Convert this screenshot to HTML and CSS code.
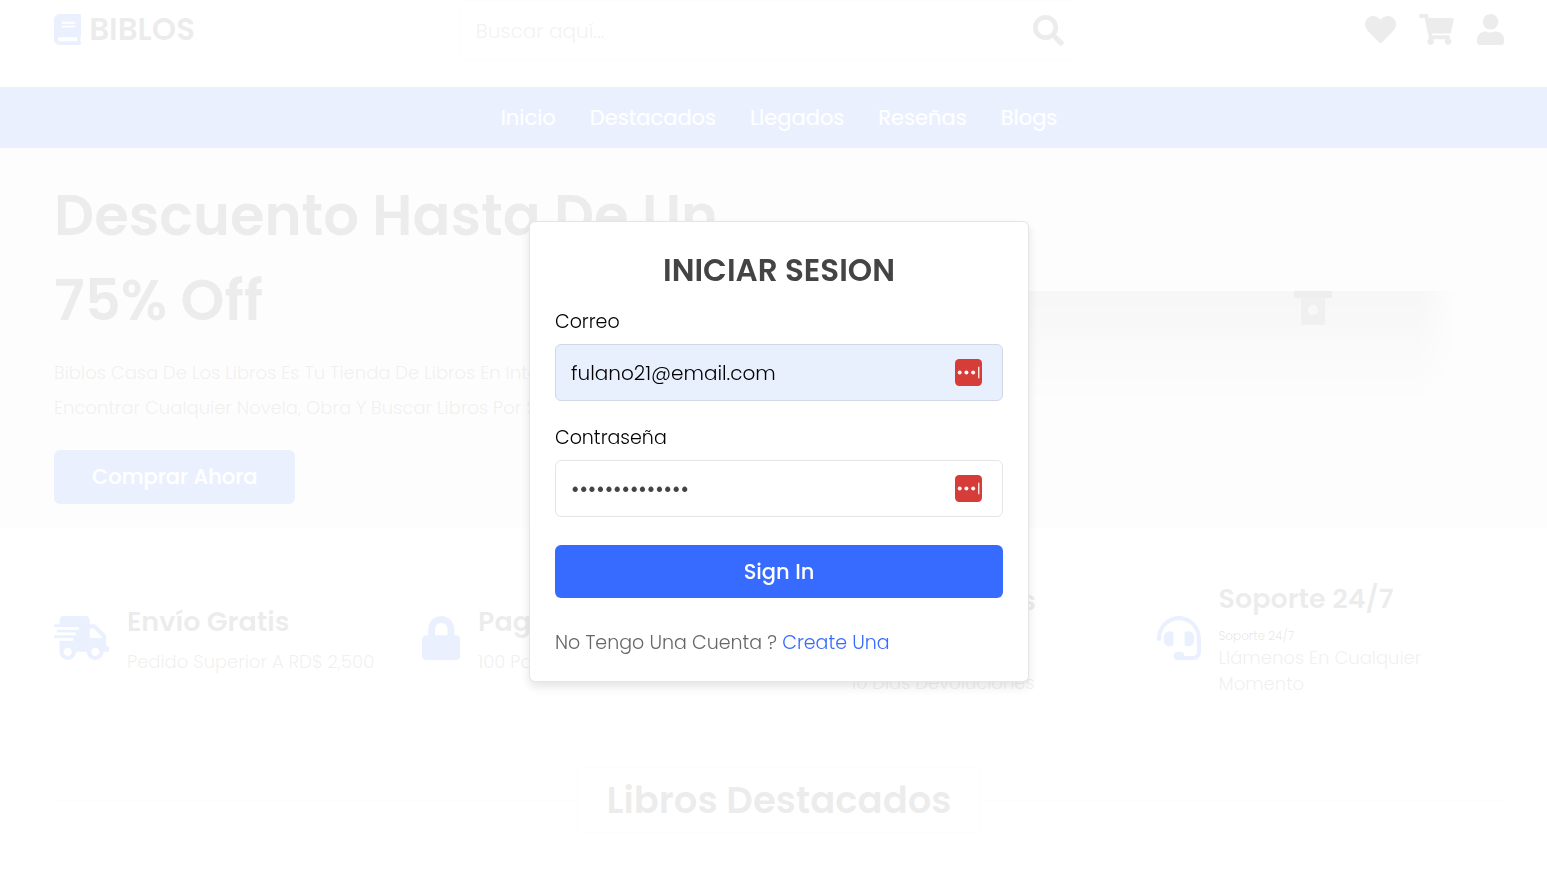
FILE: index.html
```html
<!DOCTYPE html>
<html lang="es">
<head>
<meta charset="utf-8">
<meta name="viewport" content="width=device-width, initial-scale=1">
<title>Biblos</title>
<link rel="stylesheet" href="styles.css">
</head>
<body>
<div class="page">
  <header class="header">
    <a class="logo" href="#">
      <svg class="icon icon-md" viewBox="0 0 448 512" aria-hidden="true"><path d="M448 360V24c0-13.300-10.700-24-24-24H96C43 0 0 43 0 96v320c0 53 43 96 96 96h328c13.300 0 24-10.700 24-24v-16c0-7.500-3.500-14.300-8.900-18.700-4.200-15.400-4.200-59.300 0-74.700 5.400-4.300 8.900-11.100 8.900-18.600zM128 134c0-3.300 2.700-6 6-6h212c3.300 0 6 2.700 6 6v20c0 3.300-2.700 6-6 6H134c-3.300 0-6-2.700-6-6v-20zm0 64c0-3.300 2.700-6 6-6h212c3.300 0 6 2.700 6 6v20c0 3.300-2.700 6-6 6H134c-3.300 0-6-2.700-6-6v-20zm253.400 250H96c-17.700 0-32-14.300-32-32 0-17.600 14.400-32 32-32h285.400c-1.900 17.100-1.900 46.900 0 64z"/></svg>
      <span>BIBLOS</span>
    </a>
    <form class="search">
      <input class="search-input" type="search" placeholder="Buscar aquí..." aria-label="Buscar">
      <button class="icon-button" type="button" aria-label="Buscar">
        <svg class="icon icon-md" viewBox="0 0 512 512"><path d="M505 442.700L405.300 343c-4.500-4.500-10.600-7-17-7H372c27.600-35.300 44-79.700 44-128C416 93.100 322.900 0 208 0S0 93.100 0 208s93.100 208 208 208c48.300 0 92.700-16.400 128-44v16.300c0 6.400 2.500 12.500 7 17l99.700 99.700c9.400 9.400 24.600 9.400 33.900 0l28.300-28.300c9.400-9.400 9.400-24.600.1-34zM208 336c-70.700 0-128-57.200-128-128 0-70.700 57.200-128 128-128 70.700 0 128 57.200 128 128 0 70.700-57.200 128-128 128z"/></svg>
      </button>
    </form>
    <div class="actions">
      <a href="#" aria-label="Favoritos"><svg class="icon icon-md" viewBox="0 0 512 512"><path d="M462.300 62.600C407.500 15.900 326 24.300 275.700 76.200L256 96.500l-19.700-20.300C186.100 24.300 104.500 15.900 49.700 62.600c-62.800 53.600-66.100 149.800-9.900 207.900l193.500 199.800c12.500 12.900 32.800 12.900 45.300 0l193.500-199.800c56.300-58.100 53-154.300-9.800-207.900z"/></svg></a>
      <a href="#" aria-label="Carrito"><svg class="icon icon-md" viewBox="0 0 576 512"><path d="M528.100 301.300l47.300-208C578.800 78.300 567.400 64 552 64H159.200l-9.200-44.800C147.800 8 137.900 0 126.500 0H24C10.700 0 0 10.700 0 24v16c0 13.300 10.700 24 24 24h69.900l70.200 343.400C147.300 417.100 136 435.200 136 456c0 30.900 25.100 56 56 56s56-25.100 56-56c0-15.700-6.400-29.800-16.800-40h209.600C430.400 426.200 424 440.300 424 456c0 30.900 25.100 56 56 56s56-25.100 56-56c0-22.200-12.900-41.300-31.600-50.400l5.500-24.300c3.400-15-8-29.300-23.400-29.300H218.100l-6.500-32h293.100c11.200 0 20.900-7.800 23.400-18.700z"/></svg></a>
      <a href="#" aria-label="Cuenta"><svg class="icon icon-md" viewBox="0 0 448 512"><path d="M224 256c70.700 0 128-57.300 128-128S294.700 0 224 0 96 57.300 96 128s57.300 128 128 128zm89.600 32h-16.700c-22.200 10.200-46.900 16-72.900 16s-50.600-5.800-72.900-16h-16.700C60.200 288 0 348.200 0 422.400V464c0 26.500 21.500 48 48 48h352c26.500 0 48-21.500 48-48v-41.600c0-74.200-60.200-134.400-134.400-134.400z"/></svg></a>
    </div>
  </header>

  <nav class="nav">
    <a href="#">Inicio</a>
    <a href="#">Destacados</a>
    <a href="#">Llegados</a>
    <a href="#">Reseñas</a>
    <a href="#">Blogs</a>
  </nav>

  <section class="hero">
    <div class="hero-copy">
      <h1>Descuento Hasta De Un 75% Off</h1>
      <p>Biblos Casa De Los Libros Es Tu Tienda De Libros En Internet<br>Encontrar Cualquier Novela, Obra Y Buscar Libros Por Su Título</p>
      <a class="btn hero-btn" href="#">Comprar Ahora</a>
    </div>
    <svg class="shelf" viewBox="0 0 700 120" aria-hidden="true">
      <defs>
        <linearGradient id="fall" x1="0" y1="0" x2="0" y2="1"><stop offset="0" stop-color="#aaa"/><stop offset=".3" stop-color="#bcbcbc"/><stop offset="1" stop-color="#ebebeb"/></linearGradient>
        <linearGradient id="edge" x1="0" y1="0" x2="1" y2="0"><stop offset="0" stop-color="#ebebeb" stop-opacity="0"/><stop offset="1" stop-color="#ebebeb"/></linearGradient>
      </defs>
      <rect width="655" height="120" fill="url(#fall)"/>
      <rect x="615" width="41" height="120" fill="url(#edge)"/>
      <path fill="#555" d="M490 0h38v7h-38z"/>
      <path fill="#666" d="M497 7h24v25q0 2-2 2h-20q-2 0-2-2z"/>
      <circle cx="509" cy="19" r="5" fill="#bbb"/>
      <path stroke="#999" d="M509 15v8"/>
    </svg>
  </section>

  <section class="features">
    <article class="feature">
      <svg class="icon icon-lg" viewBox="0 0 640 512" aria-hidden="true"><path d="M624 352h-16V243.900c0-12.700-5.100-24.900-14.100-33.900L494 110.100c-9-9-21.200-14.100-33.900-14.100H416V48c0-26.500-21.500-48-48-48H112C85.500 0 64 21.500 64 48v48H8c-4.400 0-8 3.600-8 8v16c0 4.400 3.600 8 8 8h272c4.400 0 8 3.600 8 8v16c0 4.400-3.600 8-8 8H40c-4.400 0-8 3.600-8 8v16c0 4.400 3.600 8 8 8h208c4.400 0 8 3.600 8 8v16c0 4.400-3.600 8-8 8H8c-4.400 0-8 3.600-8 8v16c0 4.400 3.600 8 8 8h208c4.400 0 8 3.600 8 8v16c0 4.400-3.600 8-8 8H64v128c0 53 43 96 96 96s96-43 96-96h128c0 53 43 96 96 96s96-43 96-96h48c8.800 0 16-7.200 16-16v-32c0-8.800-7.200-16-16-16zM160 464c-26.500 0-48-21.500-48-48s21.500-48 48-48 48 21.500 48 48-21.500 48-48 48zm320 0c-26.500 0-48-21.500-48-48s21.500-48 48-48 48 21.500 48 48-21.500 48-48 48zm80-208H416V144h44.100l99.900 99.900V256z"/></svg>
      <div><h3>Envío Gratis</h3><p>Pedido Superior A RD$ 2,500</p></div>
    </article>
    <article class="feature">
      <svg class="icon icon-lg" viewBox="0 0 448 512" aria-hidden="true"><path d="M400 224h-24v-72C376 68.200 307.800 0 224 0S72 68.200 72 152v72H48c-26.500 0-48 21.500-48 48v192c0 26.500 21.500 48 48 48h352c26.500 0 48-21.500 48-48V272c0-26.500-21.500-48-48-48zm-104 0H152v-72c0-39.700 32.300-72 72-72s72 32.300 72 72v72z"/></svg>
      <div><h3>Pago Seguro</h3><p>100 Pago Seguro</p></div>
    </article>
    <article class="feature">
      <svg class="icon icon-lg" viewBox="0 0 512 512" aria-hidden="true"><path d="M500 0h-47c-7 0-12 6-12 12l4 83A248 248 0 1 0 423 440c5-5 5-13 0-18l-34-34c-4-4-12-5-17 0A176 176 0 1 1 402 158l-102-5c-7 0-12 5-12 12v47c0 7 5 12 12 12h200c7 0 12-5 12-12V12c0-7-5-12-12-12z"/></svg>
      <div><h3>Devoluciones<br>Fáciles</h3><p>10 Días Devoluciones</p></div>
    </article>
    <article class="feature">
      <svg class="icon icon-lg" viewBox="0 0 512 512" aria-hidden="true"><path d="M192 208c0-17.700-14.300-32-32-32h-16c-35.300 0-64 28.700-64 64v48c0 35.300 28.700 64 64 64h16c17.700 0 32-14.300 32-32V208zm176 144c35.300 0 64-28.700 64-64v-48c0-35.300-28.700-64-64-64h-16c-17.700 0-32 14.300-32 32v112c0 17.700 14.300 32 32 32h16zM256 0C113.200 0 4.600 118.800 0 256v16c0 8.800 7.200 16 16 16h16c8.800 0 16-7.200 16-16v-16c0-114.700 93.300-208 208-208s208 93.300 208 208h-.1c.1 2.400.1 165.700.1 165.700 0 23.400-18.900 42.300-42.300 42.300H320c0-26.500-21.500-48-48-48h-32c-26.500 0-48 21.500-48 48s21.500 48 48 48h181.700c49.900 0 90.300-40.400 90.300-90.300V256C507.400 118.800 398.800 0 256 0z"/></svg>
      <div><h3>Soporte 24/7</h3><small>Soporte 24/7</small><p>Llámenos En Cualquier Momento</p></div>
    </article>
  </section>

  <section class="featured">
    <h2 class="heading"><span>Libros Destacados</span></h2>
  </section>
</div>

<div class="overlay">
  <form class="login">
    <h2>INICIAR SESION</h2>
    <label for="email">Correo</label>
    <div class="field">
      <input class="box filled" id="email" type="email" value="fulano21@email.com">
      <svg class="badge" viewBox="0 0 26 26" aria-hidden="true"><rect width="26" height="26" rx="4" fill="#d63c38"/><g fill="#fff"><circle cx="4.500" cy="13" r="1.900"/><circle cx="11" cy="13" r="1.900"/><circle cx="17.500" cy="13" r="1.900"/><path d="M22.300 7.500h1.200v11h-1.200z"/></g></svg>
    </div>
    <label for="password">Contraseña</label>
    <div class="field">
      <input class="box password" id="password" type="password" value="contrasena1234">
      <svg class="badge" viewBox="0 0 26 26" aria-hidden="true"><rect width="26" height="26" rx="4" fill="#d63c38"/><g fill="#fff"><circle cx="4.500" cy="13" r="1.900"/><circle cx="11" cy="13" r="1.900"/><circle cx="17.500" cy="13" r="1.900"/><path d="M22.300 7.500h1.200v11h-1.200z"/></g></svg>
    </div>
    <button class="btn login-btn" type="button">Sign In</button>
    <p>No Tengo Una Cuenta ? <a href="#">Create Una</a></p>
  </form>
</div>
</body>
</html>
```
FILE: styles.css
```css
:root {
  --blue: #376bff;
  --ink: #444;
  --muted: #666;
  --gutter: 54px;
  --scrollbar: 11px;
}

* {
  box-sizing: border-box;
  margin: 0;
  padding: 0;
}

html {
  overflow: hidden;
}

body {
  font-family: Poppins, Inter, "Open Sans", sans-serif;
  font-weight: 300;
  color: var(--ink);
  background: #fff;
}

a {
  color: inherit;
  text-decoration: none;
}

input,
button {
  font: inherit;
  border: 0;
  outline: 0;
  background: none;
}

.page {
  margin-right: calc(-1 * var(--scrollbar));
}

.icon {
  display: block;
  flex: none;
  width: auto;
  fill: currentColor;
}

.icon-md {
  height: 31px;
}

.icon-lg {
  height: 44px;
  color: var(--blue);
}

.header {
  display: flex;
  align-items: flex-start;
  justify-content: space-between;
  height: 87px;
  padding: 0 var(--gutter);
}

.logo,
.actions {
  display: flex;
  align-items: center;
  height: 59px;
}

.logo {
  gap: 8px;
  font-size: 31px;
  font-weight: 600;
}

.logo .icon {
  color: var(--blue);
}

.actions {
  gap: 23px;
  padding-left: 17px;
}

.search {
  display: flex;
  align-items: center;
  width: 43%;
  height: 61px;
  padding: 0 18px 0 15px;
  border: 1px solid rgba(0, 0, 0, .1);
  border-radius: 6px;
}

.search-input {
  flex: 1;
  min-width: 0;
  font-size: 20px;
}

.search-input::placeholder {
  color: #777;
}

.icon-button {
  color: var(--ink);
}

.nav {
  display: flex;
  align-items: center;
  justify-content: center;
  gap: 34px;
  height: 61px;
  font-size: 21px;
  font-weight: 400;
  color: #fff;
  background: var(--blue);
}

.hero {
  display: flex;
  align-items: center;
  justify-content: space-between;
  height: 380px;
  padding: 0 var(--gutter);
  background: #ebebeb;
}

.hero-copy {
  flex: 0 0 730px;
}

.hero-copy h1 {
  font-size: 56px;
  font-weight: 600;
  line-height: 85px;
}

.hero-copy p {
  margin-top: 12px;
  font-size: 18px;
  line-height: 35px;
  color: var(--muted);
}

.btn {
  font-size: 21px;
  font-weight: 500;
  color: #fff;
  text-align: center;
  background: var(--blue);
  border-radius: 6px;
}

.hero-btn {
  display: inline-block;
  margin-top: 25px;
  padding: 0 38px;
  line-height: 54px;
}

.shelf {
  flex: none;
  width: 700px;
  height: 120px;
  margin-top: 26px;
}

.features {
  display: grid;
  grid-template-columns: repeat(4, 1fr);
  gap: 20px;
  height: 219px;
  padding: 0 var(--gutter);
}

.feature {
  display: flex;
  align-items: center;
  gap: 18px;
}

.feature h3 {
  margin-bottom: 6px;
  font-size: 27px;
  font-weight: 600;
  line-height: 42px;
}

.feature small {
  display: block;
  font-size: 12px;
  line-height: 19px;
  color: #000;
}

.feature p {
  font-size: 18px;
  line-height: 26px;
  color: var(--muted);
}

.featured {
  padding: 20px var(--gutter);
}

.heading {
  display: flex;
  align-items: center;
  font-size: 37px;
  font-weight: 600;
}

.heading::before,
.heading::after {
  content: "";
  flex: 1;
  border-top: 1px solid rgba(0, 0, 0, .1);
}

.heading span {
  padding: 0 28px;
  line-height: 64px;
  border: 1px solid rgba(0, 0, 0, .1);
}

.overlay {
  position: fixed;
  inset: 0 calc(-1 * var(--scrollbar)) -29px 0;
  display: flex;
  align-items: center;
  justify-content: center;
  background: rgba(255, 255, 255, .9);
}

.login {
  display: flex;
  flex-direction: column;
  width: 500px;
  padding: 25px;
  background: #fff;
  border: 1px solid rgba(0, 0, 0, .1);
  border-radius: 6px;
  box-shadow: 0 5px 10px rgba(0, 0, 0, .1);
}

.login h2 {
  margin-bottom: 16px;
  font-size: 31px;
  font-weight: 600;
  line-height: 46px;
  text-align: center;
}

.login label {
  margin-bottom: 9px;
  font-size: 19px;
  line-height: 26px;
  color: #000;
}

.field {
  position: relative;
  margin-bottom: 24px;
}

.box {
  display: block;
  width: 100%;
  height: 57px;
  padding: 0 15px;
  font-size: 20px;
  color: var(--ink);
  border: 1px solid rgba(0, 0, 0, .1);
  border-radius: 6px;
}

.filled {
  color: #000;
  background: #e8f0fe;
  border-color: #d0d8e5;
}

.password {
  font-size: 23px;
}

.badge {
  position: absolute;
  top: 15px;
  right: 21px;
  width: 27px;
  height: 27px;
}

.login-btn {
  margin-top: 4px;
  line-height: 53px;
}

.login p {
  margin-top: 31px;
  font-size: 19px;
  line-height: 27px;
  color: var(--muted);
}

.login p a {
  color: var(--blue);
}
```
